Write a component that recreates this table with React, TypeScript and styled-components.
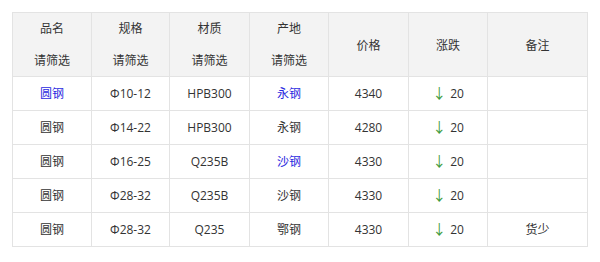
import React from "react";
import styled, { createGlobalStyle } from "styled-components";

const Global = createGlobalStyle`
  html, body { margin: 0; padding: 0; background: #fff; }
  body { font-family: "Open Sans", "Noto Sans CJK SC", sans-serif; }
`;

const Wrap = styled.div`
  padding: 12px 0 0 12px;
`;

const Table = styled.table`
  border-collapse: collapse;
  table-layout: fixed;
  width: 575px;
  font-size: 12px;
  color: #333;
`;

const Col = styled.col<{ $w: number }>`
  width: ${(p) => p.$w}px;
`;

const Th = styled.th`
  height: 63px;
  padding: 0;
  background: #f3f3f3;
  border: 1px solid #e3e3e3;
  font-weight: normal;
  text-align: center;
  vertical-align: middle;
`;

const HeadStack = styled.div`
  display: flex;
  flex-direction: column;
  align-items: center;
  gap: 14px;
  line-height: 18px;
`;

const Td = styled.td`
  height: 33px;
  padding: 0;
  border: 1px solid #e3e3e3;
  text-align: center;
  vertical-align: middle;
  line-height: 18px;
`;

const Link = styled.span`
  color: #2a2ae0;
`;

const Arrow = styled.span`
  color: #3f9c3f;
  font-size: 14px;
  margin-right: 4px;
`;

type Row = {
  name: string;
  nameLink?: boolean;
  spec: string;
  mat: string;
  origin: string;
  originLink?: boolean;
  price: string;
  change: string;
  note: string;
};

const rows: Row[] = [
  { name: "圆钢", nameLink: true, spec: "Φ10-12", mat: "HPB300", origin: "永钢", originLink: true, price: "4340", change: "20", note: "" },
  { name: "圆钢", spec: "Φ14-22", mat: "HPB300", origin: "永钢", price: "4280", change: "20", note: "" },
  { name: "圆钢", spec: "Φ16-25", mat: "Q235B", origin: "沙钢", originLink: true, price: "4330", change: "20", note: "" },
  { name: "圆钢", spec: "Φ28-32", mat: "Q235B", origin: "沙钢", price: "4330", change: "20", note: "" },
  { name: "圆钢", spec: "Φ28-32", mat: "Q235", origin: "鄂钢", price: "4330", change: "20", note: "货少" },
];

const widths = [79, 78, 80, 79, 80, 79, 100];

export default function App() {
  return (
    <Wrap>
      <Global />
      <Table>
        <colgroup>
          {widths.map((w, i) => (
            <Col key={i} $w={w} />
          ))}
        </colgroup>
        <thead>
          <tr>
            <Th><HeadStack><span>品名</span><span>请筛选</span></HeadStack></Th>
            <Th><HeadStack><span>规格</span><span>请筛选</span></HeadStack></Th>
            <Th><HeadStack><span>材质</span><span>请筛选</span></HeadStack></Th>
            <Th><HeadStack><span>产地</span><span>请筛选</span></HeadStack></Th>
            <Th>价格</Th>
            <Th>涨跌</Th>
            <Th>备注</Th>
          </tr>
        </thead>
        <tbody>
          {rows.map((r, i) => (
            <tr key={i}>
              <Td>{r.nameLink ? <Link>{r.name}</Link> : r.name}</Td>
              <Td>{r.spec}</Td>
              <Td>{r.mat}</Td>
              <Td>{r.originLink ? <Link>{r.origin}</Link> : r.origin}</Td>
              <Td>{r.price}</Td>
              <Td><Arrow>↓</Arrow>{r.change}</Td>
              <Td>{r.note}</Td>
            </tr>
          ))}
        </tbody>
      </Table>
    </Wrap>
  );
}
